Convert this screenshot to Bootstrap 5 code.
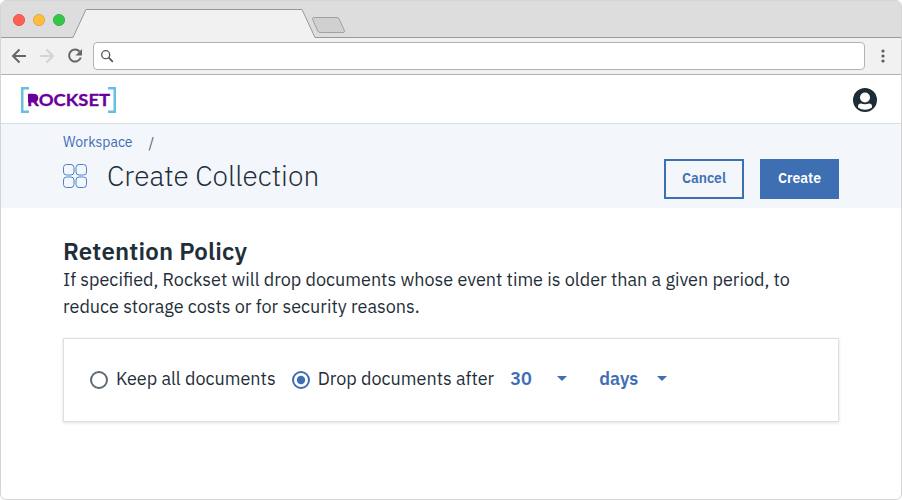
<!DOCTYPE html>
<html lang="en">
<head>
<meta charset="utf-8">
<meta name="viewport" content="width=device-width, initial-scale=1">
<title>Create Collection</title>
<link href="https://cdn.jsdelivr.net/npm/bootstrap@5.3.0/dist/css/bootstrap.min.css" rel="stylesheet">
<style>
:root { --ink: #1f2f3a; --brand: #3f6fb3; }
body { font-family: "IBM Plex Sans", Roboto, sans-serif; color: var(--ink); background: #fff; }
svg { display: block; flex: none; }
.window { height: 500px; border: 1px solid #d5d5d5; border-radius: 6px; background: #fff; }
.tabstrip { height: 37px; }
.toolbar { height: 37px; background: #f1f1f1; border-bottom: 1px solid #b3b3b3; padding: 0 12px 0 10px; }
.address { height: 28px; background: #fff; border: 1px solid #b3b3b3; border-radius: 4px; margin-left: 10px; margin-right: 13px; padding-left: 7px; }
.app-header { height: 49px; border-bottom: 1px solid #d8dee3; padding: 2px 24px 0 20px; }
.brand-text { font: 700 17px Lato, sans-serif; fill: #6a0099; stroke: #6a0099; stroke-width: .3px; }
.page-head { height: 84px; background: #f3f7fc; padding: 8px 62px 0; }
.crumbs { font-size: 14px; line-height: 20px; }
.crumbs a { color: var(--brand); text-decoration: none; }
.crumb-sep { color: #5d6872; margin-left: 16px; font-size: 15px; line-height: 22px; }
.page-title { font-size: 28px; font-weight: 300; line-height: 36px; margin-left: 20px; }
.action { --bs-btn-border-radius: 0; --bs-btn-border-width: 2px; --bs-btn-border-color: var(--brand); --bs-btn-color: var(--brand); --bs-btn-font-size: 14px; --bs-btn-font-weight: 600; height: 40px; width: 80px; padding: 0 0 2px; line-height: 34px; }
.action-main { --bs-btn-color: #fff; --bs-btn-bg: var(--brand); width: 79px; }
.action-row { margin-top: 5px; margin-bottom: -5px; }
.content { padding: 28px 62px 0; }
.section-title { font-size: 24px; font-weight: 600; line-height: 30px; letter-spacing: .2px; }
.lede { font-size: 18px; line-height: 27px; }
.panel { height: 84px; border: 1px solid #dfdfdf; border-radius: 0; box-shadow: 0 1px 3px rgba(0,0,0,.13); margin-top: 18px; padding: 0 26px; }
.options { font-size: 18px; line-height: 24px; }
.options span { margin-bottom: 2px; }
.options .caret { margin-bottom: 3px; }
.choice { color: var(--brand); font-weight: 600; }
.amount { width: 47px; }
.unit { width: 58px; margin-left: 32px; }
</style>
</head>
<body>
<div class="window overflow-hidden d-flex flex-column">
  <div class="tabstrip">
    <svg width="900" height="37" viewBox="1 1 900 37">
      <rect x="1" y="1" width="900" height="37" fill="#ddd"/>
      <path d="M0 37.5H73L86 9.500H302L315 37.500H902V39H0Z" fill="#f1f1f1"/>
      <path d="M0 37.500H73L86 9.500H302L315 37.500H902" fill="none" stroke="#999"/>
      <path d="M313.500 17.500H337Q338.500 17.500 339.200 19L344.300 30.500Q345 32.500 343.500 32.500H320.500Q318.500 32.500 317.700 31L312.700 19.500Q312 17.500 313.500 17.500Z" fill="#d0d0d0" stroke="#a0a0a0"/>
      <circle cx="19" cy="20" r="5.600" fill="#ff5f57" stroke="#e2463f" stroke-width=".8"/>
      <circle cx="39" cy="20" r="5.600" fill="#ffbd3e" stroke="#dfa032" stroke-width=".8"/>
      <circle cx="59" cy="20" r="5.600" fill="#34c84a" stroke="#28ab36" stroke-width=".8"/>
    </svg>
  </div>
  <div class="toolbar d-flex align-items-center">
    <svg width="72" height="20" viewBox="11 46 72 20" fill="none" stroke="#666" stroke-width="2">
      <path d="M26 56H13M19.500 49.500L13 56L19.500 62.500"/>
      <path d="M40 56H53M46.500 49.500L53 56L46.500 62.500" stroke="#d4d4d4"/>
      <path d="M79.500 51.500A6 6 0 1 0 80.800 57.500"/>
      <path d="M82 49V55.500H75.500Z" fill="#666" stroke="none"/>
    </svg>
    <div class="address flex-grow-1 d-flex align-items-center">
      <svg width="13" height="13" viewBox="0 0 13 13" fill="none" stroke="#555" stroke-width="1.300"><circle cx="4.700" cy="4.700" r="4"/><path d="M7.700 7.700L11.800 11.800" stroke-width="1.700"/></svg>
    </div>
    <svg width="11" height="16" viewBox="0 0 11 16" fill="#5b5b5b"><circle cx="5" cy="3" r="1.600"/><circle cx="5" cy="8" r="1.600"/><circle cx="5" cy="13" r="1.600"/></svg>
  </div>
  <header class="app-header d-flex align-items-center justify-content-between">
    <svg width="95" height="26" viewBox="21 87 95 26">
      <path d="M29 88.250H22.250V111.750H29M108 88.250H114.750V111.750H108" fill="none" stroke="#67c0e0" stroke-width="2.500"/>
      <path d="M28 94H34A4 4 0 0 1 34 102.500H28Z" fill="#6a0099"/>
      <text class="brand-text" x="27" y="106" textLength="83" lengthAdjust="spacingAndGlyphs">ROCKSET</text>
    </svg>
    <svg width="24" height="24" viewBox="0 0 24 24"><circle cx="12" cy="12" r="12" fill="#1c2d38"/><circle cx="12" cy="9.500" r="5" fill="#fff"/><path d="M5 18.500Q5 15.500 8 15.500Q12 17 16 15.500Q19 15.500 19 18.500V19.500Q16 21.700 12 21.700Q8 21.700 5 19.500Z" fill="#fff"/></svg>
  </header>
  <section class="page-head">
    <nav class="crumbs d-flex"><a href="#">Workspace</a><span class="crumb-sep">/</span></nav>
    <div class="d-flex align-items-start">
      <div class="d-flex align-items-center flex-grow-1 pt-1">
        <svg width="24" height="24" viewBox="0 0 24 24" fill="none" stroke="#4b81cc"><rect x=".5" y=".5" width="10.500" height="10.500" rx="3"/><rect x="13" y=".5" width="10.500" height="10.500" rx="3"/><rect x=".5" y="13" width="10.500" height="10.500" rx="3"/><rect x="13" y="13" width="10.500" height="10.500" rx="3"/></svg>
        <h1 class="page-title mb-0">Create Collection</h1>
      </div>
      <div class="action-row d-flex gap-3">
        <button class="btn action" type="button">Cancel</button>
        <button class="btn action action-main" type="button">Create</button>
      </div>
    </div>
  </section>
  <main class="content">
    <h2 class="section-title mb-0">Retention Policy</h2>
    <p class="lede mb-0">If specified, Rockset will drop documents whose event time is older than a given period, to<br>reduce storage costs or for security reasons.</p>
    <div class="panel card flex-row align-items-center options">
      <svg width="18" height="18" viewBox="0 0 18 18"><circle cx="9" cy="9" r="8" fill="#fff" stroke="#5d6b75" stroke-width="2"/></svg>
      <span class="ms-2">Keep all documents</span>
      <svg class="ms-3" width="18" height="18" viewBox="0 0 18 18"><circle cx="9" cy="9" r="8" fill="#fff" stroke="#3f6fb3" stroke-width="2"/><circle cx="9" cy="9" r="4.200" fill="#3f6fb3"/></svg>
      <span class="ms-2">Drop documents after</span>
      <span class="choice amount ms-3">30</span>
      <svg class="caret" width="10" height="5" viewBox="0 0 10 5"><path d="M0 0H10L5 5Z" fill="#3f6fb3"/></svg>
      <span class="choice unit">days</span>
      <svg class="caret" width="10" height="5" viewBox="0 0 10 5"><path d="M0 0H10L5 5Z" fill="#3f6fb3"/></svg>
    </div>
  </main>
</div>
<script src="https://cdn.jsdelivr.net/npm/bootstrap@5.3.0/dist/js/bootstrap.bundle.min.js"></script>
</body>
</html>
